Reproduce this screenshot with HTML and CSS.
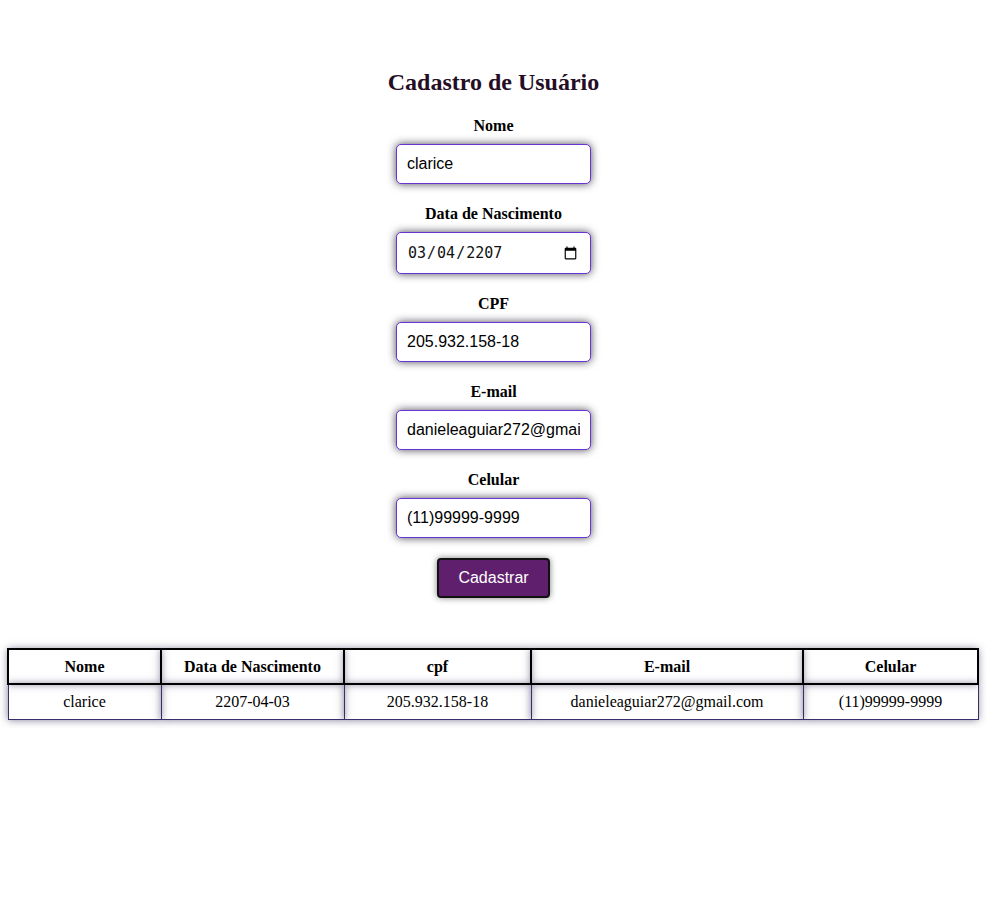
FILE: index.html
```html
<!DOCTYPE html>
<html lang="pt-BR">
<head>
<meta charset="utf-8">
<title>Cadastro de Usuário</title>
<link rel="stylesheet" href="styles.css">
</head>
<body>
<main class="page">
  <form class="form">
    <h2 class="title">Cadastro de Usuário</h2>
    <div class="field">
      <label class="label" for="nome">Nome</label>
      <input class="input" id="nome" type="text" value="clarice">
    </div>
    <div class="field">
      <label class="label" for="nasc">Data de Nascimento</label>
      <input class="input input-date" id="nasc" type="date" value="2207-03-04">
    </div>
    <div class="field">
      <label class="label" for="cpf">CPF</label>
      <input class="input" id="cpf" type="text" value="205.932.158-18">
    </div>
    <div class="field">
      <label class="label" for="email">E-mail</label>
      <input class="input" id="email" type="text" value="danieleaguiar272@gmail.com">
    </div>
    <div class="field">
      <label class="label" for="cel">Celular</label>
      <input class="input" id="cel" type="text" value="(11)99999-9999">
    </div>
    <button class="btn" type="button">Cadastrar</button>
  </form>

  <table class="table">
    <colgroup>
      <col class="c1"><col class="c2"><col class="c3"><col class="c4"><col class="c5">
    </colgroup>
    <thead>
      <tr>
        <th>Nome</th>
        <th>Data de Nascimento</th>
        <th>cpf</th>
        <th>E-mail</th>
        <th>Celular</th>
      </tr>
    </thead>
    <tbody>
      <tr>
        <td>clarice</td>
        <td>2207-04-03</td>
        <td>205.932.158-18</td>
        <td>danieleaguiar272@gmail.com</td>
        <td>(11)99999-9999</td>
      </tr>
    </tbody>
  </table>
</main>
</body>
</html>
```

FILE: styles.css
```css
html, body {
  margin: 0;
  padding: 0;
  background: #ffffff;
}

body {
  padding: 8px;
  font-family: "Liberation Serif", "Times New Roman", serif;
  color: #000;
}

.page {
  display: flex;
  flex-direction: column;
  align-items: flex-start;
}

.form {
  align-self: stretch;
  display: flex;
  flex-direction: column;
  align-items: center;
  padding-top: 60px;
}

.title {
  margin: 0 0 20px;
  font-size: 24px;
  line-height: 28px;
  font-weight: bold;
  color: #250d25;
}

.field {
  display: flex;
  flex-direction: column;
  align-items: center;
  margin-bottom: 20px;
}

.label {
  font-size: 16px;
  line-height: 18px;
  font-weight: bold;
  padding-top: 1px;
  margin-bottom: 9px;
}

.input {
  box-sizing: border-box;
  width: 195px;
  height: 40px;
  padding: 0 10px;
  border: 1.5px solid #6a34d6;
  border-radius: 5px;
  box-shadow: 0 0 9px rgba(30, 25, 40, 0.8);
  font-family: "Liberation Sans", Arial, sans-serif;
  font-size: 16px;
  color: #000;
  background: #fff;
  outline: none;
}

.input-date {
  height: 42px;
  font-family: "DejaVu Sans Mono", monospace;
  font-size: 15px;
  color: #111;
}

.btn {
  box-sizing: border-box;
  width: 113px;
  height: 40px;
  background: #5f1f6c;
  color: #ffffff;
  border: 2px solid #111;
  border-radius: 4px;
  box-shadow: 0 0 6px rgba(40, 40, 40, 0.6);
  font-family: "Liberation Sans", Arial, sans-serif;
  font-size: 16px;
  cursor: pointer;
}

.table {
  margin-top: 50px;
  margin-left: -1px;
  width: 970px;
  border-collapse: collapse;
  table-layout: fixed;
  font-family: "Liberation Serif", "Times New Roman", serif;
  font-size: 16px;
  text-align: center;
}

.c1 { width: 153px; }
.c2 { width: 183px; }
.c3 { width: 187px; }
.c4 { width: 272px; }
.c5 { width: 175px; }

.table th {
  height: 33px;
  padding: 0;
  border: 2px solid #000;
  font-weight: bold;
  box-shadow: 0 0 8px rgba(60, 50, 90, 0.65);
}

.table td {
  height: 34px;
  padding: 0;
  border: 1px solid #3a2e6a;
  box-shadow: 0 0 8px rgba(60, 50, 90, 0.65);
}
```
